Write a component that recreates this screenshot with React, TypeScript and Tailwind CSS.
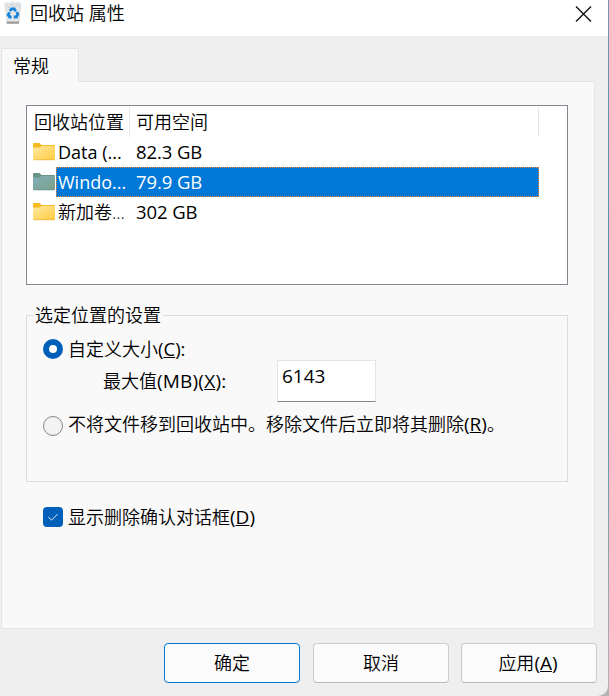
import React, { useState } from 'react';

interface Drive {
  name: string;
  free: string;
}

const drives: Drive[] = [
  { name: 'Data (...', free: '82.3 GB' },
  { name: 'Windo...', free: '79.9 GB' },
  { name: '新加卷...', free: '302 GB' },
];

const RecycleBinIcon = () => (
  <svg width="18" height="24" viewBox="0 0 18 24" className="shrink-0">
    <path d="M0.8 3.5 L3 1.8 L5 3 L8 1.2 L11 2.6 L13.5 1.4 L17 3.2 L14.8 23 H3.2 Z" fill="#e3e7ea" />
    <path d="M2.5 4 L5 8 L8 3.5 L10.5 8 L14 3.5 L15.5 7" fill="none" stroke="#c9ced2" strokeWidth="0.8" />
    <path d="M0.8 3.5 L3.2 23 H14.8 L17 3.2" fill="none" stroke="#cdd2d6" strokeWidth="0.7" />
    <path d="M2.6 21.4 H15.2 L15 23.8 H2.8 Z" fill="#9b9b9b" />
    <g fill="none" stroke="#1683d8" strokeWidth="2.8">
      <path d="M5.8 11 L7.6 8.8 H10.2 L11.8 11.2" />
      <path d="M12.8 12 L13.8 14.4 L12.4 17 H9.8" />
      <path d="M7.6 17 H5.6 L4.2 14.8 L5.6 12.4" />
    </g>
  </svg>
);

const FolderIcon: React.FC<{ selected: boolean }> = ({ selected }) => (
  <svg width="22" height="18" viewBox="0 0 22 18" className="shrink-0">
    <defs>
      <linearGradient id="folder" x1="0" y1="0" x2="1" y2="1">
        <stop offset="0" stopColor="#ffe9a6" />
        <stop offset="1" stopColor="#ffcb3d" />
      </linearGradient>
      <linearGradient id="folder-selected" x1="0" y1="0" x2="1" y2="1">
        <stop offset="0" stopColor="#7fb0bd" />
        <stop offset="1" stopColor="#7c9f85" />
      </linearGradient>
    </defs>
    <path
      d="M0 1 Q0 0 1 0 H6.5 L8.5 2 H21 Q22 2 22 3 V8 H0 Z"
      fill={selected ? '#6b9683' : '#f6b91f'}
    />
    <path
      d="M0 4.6 H6.5 L8.5 3 H21 Q22 3 22 4 V16 Q22 17 21 17 H1 Q0 17 0 16 Z"
      fill={selected ? 'url(#folder-selected)' : 'url(#folder)'}
    />
    <path d="M0.5 16.8 H21.5" stroke={selected ? '#5f8c8f' : '#e9b436'} strokeWidth="0.7" />
  </svg>
);

const Radio: React.FC<{ checked: boolean }> = ({ checked }) => (
  <span
    className={`box-border h-5 w-5 shrink-0 rounded-full ${
      checked ? 'border-[6px] border-[#005fb8] bg-white' : 'border border-[#868686] bg-[#f3f3f3]'
    }`}
  />
);

const App = () => {
  const [selected, setSelected] = useState(1);
  const [mode, setMode] = useState<'custom' | 'delete'>('custom');
  const [confirm, setConfirm] = useState(true);

  return (
    <div className="flex h-[696px] w-[609px] overflow-hidden bg-linear-to-b from-[#7895b4] via-[#3f8fa5] to-[#b4b4b4] font-['Open_Sans','Noto_Sans_CJK_SC',sans-serif] text-[18px] leading-6 font-[350] whitespace-nowrap text-black">
      <div className="flex w-[608px] flex-col overflow-hidden rounded-br-[10px] bg-[#efefef]">
        {/* Title bar */}
        <div className="flex h-9 shrink-0 items-start bg-white pl-1">
          <RecycleBinIcon />
          <span className="mt-px ml-2">回收站 属性</span>
          <button className="mt-1.5 mr-4 ml-auto" aria-label="关闭">
            <svg width="17" height="16" viewBox="0 0 17 16">
              <path d="M1 0.5 L16 15.5 M16 0.5 L1 15.5" stroke="#111" strokeWidth="1.4" />
            </svg>
          </button>
        </div>

        {/* Tab strip */}
        <div className="mt-3 ml-px flex h-[34px] w-[594px] shrink-0">
          <div className="w-[78px] border-x border-t border-[#e5e5e5] bg-[#f9f9f9] pt-[5px] pl-[11px]">常规</div>
          <div className="flex-1 border-b border-[#e5e5e5]" />
        </div>

        <div className="ml-px h-[547px] w-[594px] shrink-0 border-x border-b border-[#e5e5e5] bg-[#f9f9f9] pt-[23px] pl-6">
          {/* Drive list */}
          <div className="h-[180px] w-[542px] border border-[#828790] bg-white pt-px">
            <div className="flex h-[30px] w-[512px] border-r border-[#e5e5e5]">
              <span className="w-[103px] border-r border-[#e5e5e5] pt-[3px] pl-[7px]">回收站位置</span>
              <span className="pt-[3px] pl-[6px]">可用空间</span>
            </div>
            {drives.map((drive, i) => (
              <div key={drive.name} className="flex h-[30px] pl-[6px]" onClick={() => setSelected(i)}>
                <span className="w-[23px] pt-[6px]">
                  <FolderIcon selected={i === selected} />
                </span>
                <span
                  className={`flex w-[483px] border border-dotted pt-[2px] pl-px ${
                    i === selected ? 'border-[#ff8728] bg-[#0078d7] text-white' : 'border-transparent'
                  }`}
                >
                  <span className={`w-[78px] ${/^[A-Z]/.test(drive.name) ? 'font-normal' : ''}`}>{drive.name}</span>
                  <span className="text-[18.5px] font-normal tracking-[-0.1px]">{drive.free}</span>
                </span>
              </div>
            ))}
          </div>

          {/* Settings group */}
          <fieldset className="mt-[18px] h-[179px] w-[542px] border border-[#dcdcdc] pl-4">
            <legend className="-ml-[10px] px-[2px] leading-6">选定位置的设置</legend>
            <label className="mt-3 flex h-5 items-center gap-[5px]" onClick={() => setMode('custom')}>
              <Radio checked={mode === 'custom'} />
              <span>
                自定义大小
                <span className="text-[18.5px] font-normal">
                  (<u>C</u>):
                </span>
              </span>
            </label>
            <div className="mt-px flex h-[42px] pl-[60px]">
              <span className="w-[174px] pt-[9px]">
                最大值
                <span className="text-[19px] font-normal tracking-[0.2px]">
                  (MB)(<u>X</u>):
                </span>
              </span>
              <input
                className="h-[42px] w-[99px] border border-b-[#868686] border-[#e5e5e5] bg-white pb-[10px] pl-1 text-[19px] font-normal outline-none"
                defaultValue="6143"
              />
            </div>
            <label className="mt-[14px] flex h-5 items-center gap-[5px]" onClick={() => setMode('delete')}>
              <Radio checked={mode === 'delete'} />
              <span className="-mt-1">
                不将文件移到回收站中。移除文件后立即将其删除
                <span className="text-[19px] font-normal">
                  (<u>R</u>)
                </span>
                。
              </span>
            </label>
          </fieldset>

          <label className="mt-[25px] ml-[17px] flex h-5 items-center gap-[5px]" onClick={() => setConfirm(!confirm)}>
            <span className="flex h-5 w-5 shrink-0 items-center justify-center rounded-[4px] bg-[#005fb8]">
              {confirm && (
                <svg width="12" height="10" viewBox="0 0 12 10">
                  <path d="M1.3 5 L4.5 8.2 L10.7 2" fill="none" stroke="#fff" strokeWidth="0.9" />
                </svg>
              )}
            </span>
            <span>
              显示删除确认对话框
              <span className="text-[19px] font-normal">
                (<u>D</u>)
              </span>
            </span>
          </label>
        </div>

        {/* Buttons */}
        <div className="mt-[14px] flex pl-[164px]">
          <button className="h-10 w-[136px] rounded-[4px] border border-[#0078d4] bg-[#fbfbfb]">确定</button>
          <button className="ml-[13px] h-10 w-[136px] rounded-[4px] border border-[#cccccc] border-b-[#b8b8b8] bg-[#fbfbfb]">
            取消
          </button>
          <button className="ml-3 h-10 w-[136px] rounded-[4px] border border-[#cccccc] border-b-[#b8b8b8] bg-[#fbfbfb] pr-[2px]">
            应用
            <span className="text-[19px] font-normal">
              (<u>A</u>)
            </span>
          </button>
        </div>
      </div>
    </div>
  );
};

export default App;
